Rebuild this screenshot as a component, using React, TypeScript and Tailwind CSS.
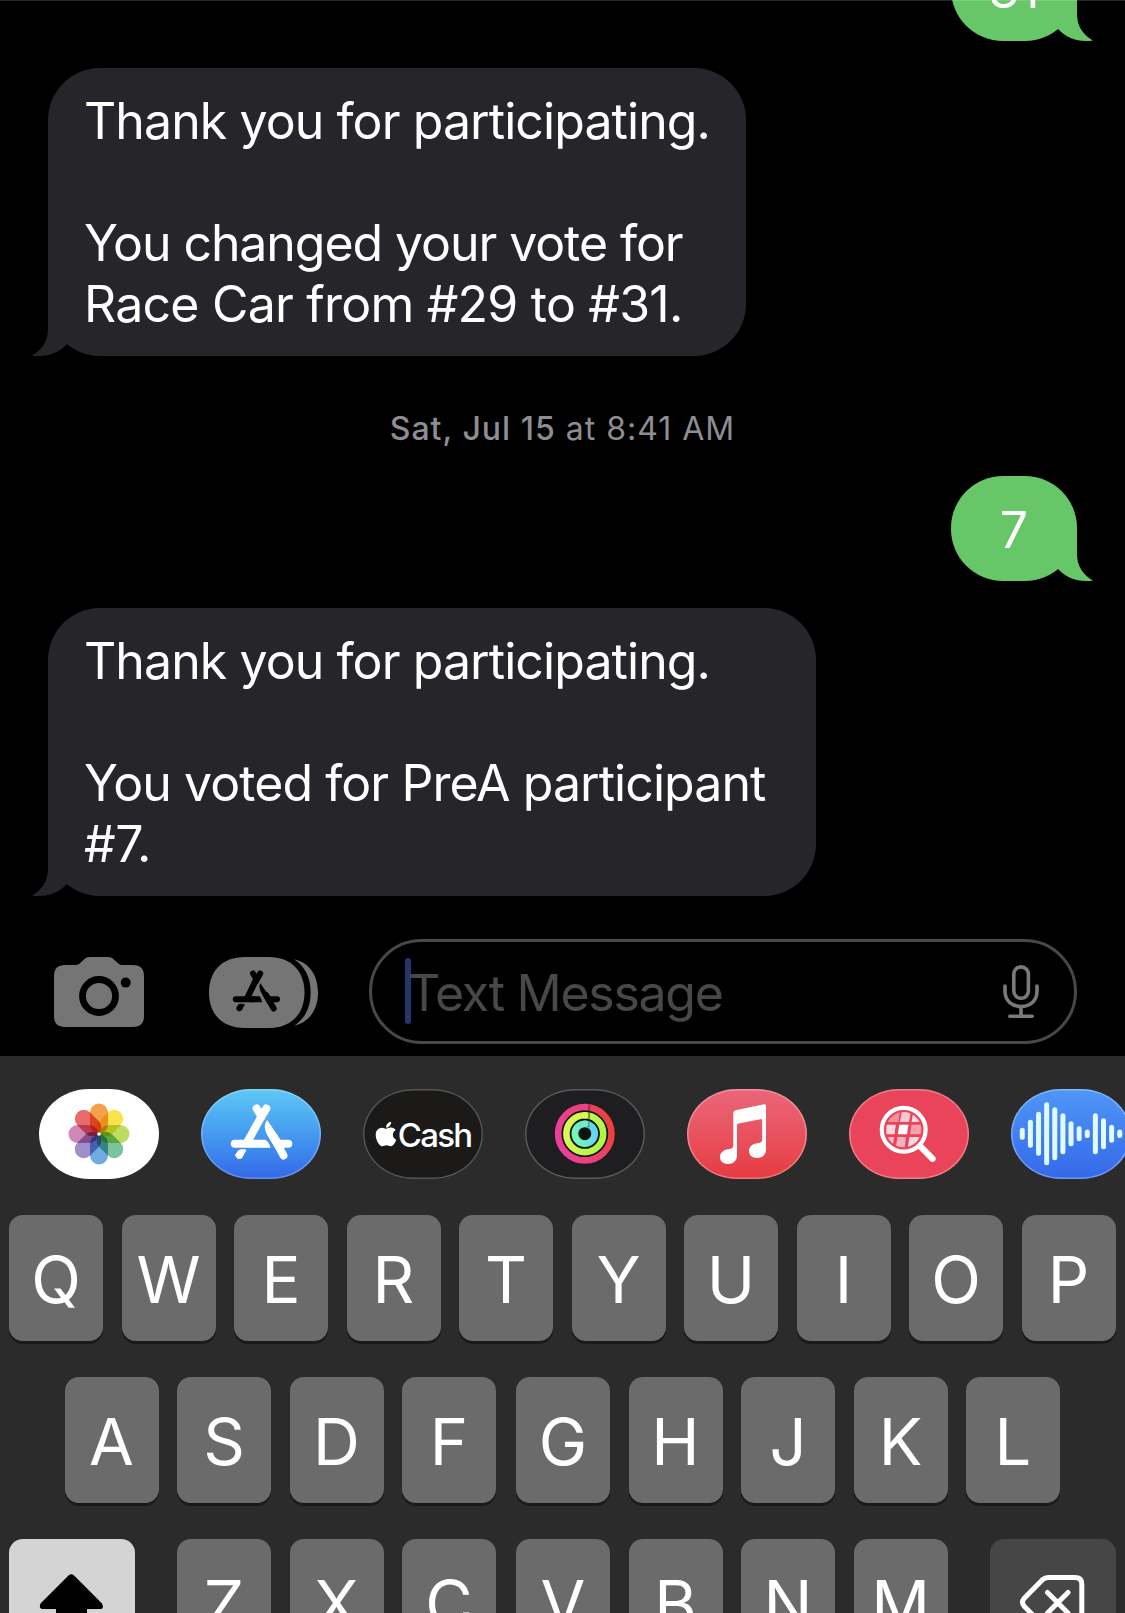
import React from "react";
import { FaApple } from "react-icons/fa";

const chip =
  "relative flex h-[90px] w-[120px] shrink-0 items-center justify-center overflow-hidden rounded-[50px/45px]";

function Tail({ side }: { side: "left" | "right" }) {
  return (
    <svg
      className={
        side === "left"
          ? "absolute bottom-0 -left-4 h-[52px] w-[52px] text-[#26252a]"
          : "absolute -right-4 bottom-0 h-[52px] w-[52px] -scale-x-100 text-[#67c768]"
      }
      viewBox="0 0 52 52"
      fill="currentColor"
    >
      <path d="M16 0V25C16 37 10 46 0 51.400C14 53.600 26 49.500 35 40L52 20V0Z" />
    </svg>
  );
}

function Incoming({ width, children }: { width: string; children: React.ReactNode }) {
  return (
    <div className={`relative ml-12 h-[288px] rounded-[52px] bg-[#26252a] pt-[23px] pl-9 ${width}`}>
      <Tail side="left" />
      <div className="relative text-[50px] leading-[61px] whitespace-nowrap text-white">{children}</div>
    </div>
  );
}

function Outgoing({ children }: { children: React.ReactNode }) {
  return (
    <div className="relative mr-12 flex h-[105px] w-[126px] shrink-0 items-center justify-center self-end rounded-[52px] bg-[#67c768] pt-[3px]">
      <Tail side="right" />
      <span className="relative text-[50px] leading-[61px] text-white">{children}</span>
    </div>
  );
}

function CameraIcon() {
  return (
    <svg width="90" height="70" viewBox="0 0 90 70">
      <path
        fill="#757575"
        d="M11 8H21C25 8 26 6 29 3.500C32 0.500 33 0 37 0H53C57 0 58 0.500 61 3.500C64 6 65 8 69 8H79Q90 8 90 19V59Q90 70 79 70H11Q0 70 0 59V19Q0 8 11 8Z"
      />
      <circle cx="45" cy="39" r="16.500" fill="none" stroke="#000" strokeWidth="6.800" />
      <circle cx="71.700" cy="25.600" r="5" fill="#000" />
    </svg>
  );
}

function AppsButtonIcon() {
  return (
    <svg width="109" height="71" viewBox="0 0 109 71">
      <path
        fill="#757575"
        d="M36 0H60C82 0 95.500 14 95.500 35.500S82 71 60 71H36C13 71 0 57 0 35.500S13 0 36 0Z"
      />
      <path fill="#757575" d="M85 2.300C100 5.500 109 18 109 35.500S100 65.500 85 68.700C96 62 101.700 50 101.700 35.500S96 9 85 2.300Z" />
      <g stroke="#000" strokeWidth="6" strokeLinecap="round" fill="none">
        <path d="M44 16.500L46.500 20.500" />
        <path d="M51.200 16.500L47 24" />
        <path d="M26.800 42.300H44" />
        <path d="M62 42.300H68" />
        <path d="M57 38L64.700 51.500" />
      </g>
      <path d="M44.200 21.500L50 24L41 42H34.500Z" />
      <path d="M42 39.300H50.500Q53 42 53 45.300H42Z" />
      <path d="M51.200 26Q49 31 53 37L59 47.500L63.500 44Z" />
      <path d="M29.700 47.500Q33 46.500 35.300 47.800L32.500 53A2.800 2.800 0 0 1 27.600 51Z" stroke="#000" strokeWidth=".8" />
    </svg>
  );
}

function MicIcon() {
  return (
    <svg width="36" height="54" viewBox="0 0 36 54" fill="none" stroke="#7a7a7a" strokeWidth="3.600" strokeLinecap="round">
      <rect x="10.800" y="1.900" width="14.600" height="31.400" rx="7.300" />
      <path d="M2 21V26C2 36 9 41.500 18 41.500S34 36 34 26V21M18 42V51M6.800 51.300H29.200" />
    </svg>
  );
}

const petals = ["#f1a24a", "#f8e34a", "#bedb62", "#7cc29b", "#70abdf", "#a08fcb", "#cf88b6", "#e96a6c"];

function PhotosIcon() {
  return (
    <svg className="isolate" width="120" height="90" viewBox="0 0 120 90">
      {petals.map((c, i) => (
        <rect
          key={c}
          x="51"
          y="14.500"
          width="18"
          height="30"
          rx="9"
          fill={c}
          transform={`rotate(${i * 45} 60 45)`}
          className="mix-blend-multiply"
        />
      ))}
      <circle cx="60" cy="45" r="1.800" fill="#fff" />
    </svg>
  );
}

function AppStoreIcon() {
  return (
    <svg width="120" height="90" viewBox="0 0 120 90">
      <g stroke="#fff" strokeWidth="8" strokeLinecap="round" fill="none">
        <path d="M55.700 19.500L59.500 26" />
        <path d="M65.300 19.500L60 28.500" />
        <path d="M33.800 54.700H48" />
        <path d="M78 54.700H87.300" />
        <path d="M72 46.500L82.500 66.500" />
      </g>
      <g fill="#fff">
        <path d="M56.500 26.500L63.500 30L52 51H42.800Z" />
        <path d="M48 50.700H64.500Q69 54 69.500 58.700H48Z" />
        <path d="M66.200 31Q61 37 66.500 46.500L74.500 60L81 53Z" />
        <path d="M37.600 61.500Q41 60 45 61L40.500 69A4 4 0 0 1 34.500 66Z" stroke="#fff" strokeWidth="1" strokeLinejoin="round" />
      </g>
    </svg>
  );
}

function ActivityIcon() {
  return (
    <svg width="120" height="90" viewBox="0 0 120 90" fill="none">
      <defs>
        <linearGradient id="ringA" x1="0" x2="1" y1=".3" y2="0">
          <stop offset="0" stopColor="#ea3f98" />
          <stop offset=".55" stopColor="#ea4270" />
          <stop offset="1" stopColor="#ee3f2c" />
        </linearGradient>
        <linearGradient id="ringB" x1="0" x2="1" y1="0" y2=".3">
          <stop offset="0" stopColor="#e2f855" />
          <stop offset="1" stopColor="#aef748" />
        </linearGradient>
        <linearGradient id="ringC" x1="0" x2="1" y1=".3" y2="0">
          <stop offset="0" stopColor="#75f3bb" />
          <stop offset="1" stopColor="#5fd2f8" />
        </linearGradient>
      </defs>
      <circle cx="59.800" cy="44.700" r="30" fill="#0c1410" />
      <circle cx="59.800" cy="44.700" r="26.700" stroke="url(#ringA)" strokeWidth="6.600" />
      <circle cx="59.800" cy="44.700" r="18.400" stroke="url(#ringB)" strokeWidth="6.600" />
      <circle cx="59.800" cy="44.700" r="9.900" stroke="url(#ringC)" strokeWidth="6.800" />
      <path d="M64 15.400V21.400" stroke="#8c1d14" strokeOpacity=".6" strokeWidth="2.500" />
      <path d="M63.800 23.600V29.600" stroke="#3f6a10" strokeOpacity=".7" strokeWidth="2.500" />
      <path d="M63.400 32.600V38.500" stroke="#1a7a80" strokeOpacity=".6" strokeWidth="2.200" />
      <circle cx="60" cy="18" r="3.300" fill="#ea4190" />
      <circle cx="60" cy="26.300" r="3.300" fill="#dff756" />
      <circle cx="60" cy="34.800" r="3.300" fill="#74efbc" />
    </svg>
  );
}

function MusicIcon() {
  return (
    <svg width="120" height="90" viewBox="0 0 120 90" fill="#fff">
      <path d="M48.500 21.200L77 15.300Q79 15 79 17V60.500C79 66 75 68.900 70 68.900C65 68.900 62 66 62 62C62 57.500 65.500 54.800 70.500 54.200C74 53.700 75.200 53 75.200 50V31.500Q75.200 29.800 73.500 30.200L51.500 34.500Q50 34.900 50 36.500V66.500C50 72 46 75 41 75C36 75 33 72 33 68C33 63.500 36.500 60.800 41.500 60.200C45 59.700 46.300 59 46.300 56V24Q46.300 21.700 48.500 21.200Z" />
    </svg>
  );
}

function ImageSearchIcon() {
  return (
    <svg width="120" height="90" viewBox="0 0 120 90" fill="#fff">
      <defs>
        <clipPath id="lens">
          <circle cx="54.700" cy="40.700" r="17.600" />
        </clipPath>
      </defs>
      <g clipPath="url(#lens)">
        <path d="M36 22H51L49.500 33H36Z" opacity=".4" />
        <path d="M53 22H62L60 33H50.800Z" opacity=".7" />
        <path d="M64.500 22H74V33H62.500Z" opacity=".8" />
        <path d="M36 35.700H46.800L45.500 45.300H36Z" opacity=".8" />
        <path d="M50.300 35.700H59.500L58 45.300H48.800Z" />
        <path d="M62.500 35.700H74V45.300H61Z" opacity=".5" />
        <path d="M36 48H45L43.500 60H36Z" opacity=".65" />
        <path d="M48.500 48H57L55.500 60H46.500Z" opacity=".6" />
        <path d="M60.500 48H74V60H58.500Z" opacity=".8" />
      </g>
      <circle cx="54.700" cy="40.700" r="21.900" fill="none" stroke="#fff" strokeWidth="4.200" />
      <path d="M71 57L83.500 69.700" stroke="#fff" strokeWidth="6.400" strokeLinecap="round" />
    </svg>
  );
}

const wave = [12, 28, 44, 63, 53, 41, 25, 15, 8.5, 41, 31, 18, 8.5];

function AudioIcon() {
  return (
    <svg width="120" height="90" viewBox="0 0 120 90" fill="#e0fbff">
      {wave.map((h, i) => (
        <rect key={i} x={8.8 + i * 8.12} y={44.7 - h / 2} width="5" height={h} rx="2.500" />
      ))}
    </svg>
  );
}

function Key({ label }: { label: string }) {
  return (
    <div className="flex h-[126px] w-[94px] shrink-0 items-center justify-center rounded-[14px] bg-[#6b6b6b] pt-[2px] text-[65px] leading-none font-normal text-white shadow-[0_3px_0_#1a1a1a]">
      {label}
    </div>
  );
}

function Keys({ letters }: { letters: string }) {
  return (
    <div className="flex gap-[18.500px]">
      {letters.split("").map((l) => (
        <Key key={l} label={l} />
      ))}
    </div>
  );
}

export default function App() {
  return (
    <div className="flex h-[1613px] w-[1125px] flex-col overflow-hidden bg-black font-['Inter','Liberation_Sans',sans-serif]">
      <main className="relative flex h-[939px] shrink-0 flex-col">
        <div className="absolute inset-x-0 top-0 z-10 h-px bg-white/15" />
        <div className="-mt-16 flex flex-col">
          <Outgoing>31</Outgoing>
        </div>
        <div className="mt-[27px]">
          <Incoming width="w-[698px]">
            <p className="tracking-[-0.920px]">Thank you for participating.</p>
            <br />
            <p className="tracking-[-1.080px]">You changed your vote for</p>
            <p className="tracking-[-0.780px]">Race Car from #29 to #31.</p>
          </Incoming>
        </div>
        <div className="mt-[53px] h-10 text-center text-[32px] leading-10 tracking-[1px] text-[#8d8d93]">
          <span className="font-medium">Sat, Jul 15</span> at 8:41 AM
        </div>
        <div className="mt-[27px] flex flex-col">
          <Outgoing>7</Outgoing>
        </div>
        <div className="mt-[27px]">
          <Incoming width="w-[768px]">
            <p className="tracking-[-0.920px]">Thank you for participating.</p>
            <br />
            <p className="tracking-[-0.930px]">You voted for PreA participant</p>
            <p className="tracking-[-0.300px]">#7.</p>
          </Incoming>
        </div>
      </main>

      <div className="flex h-[117px] shrink-0 items-start pl-[54px]">
        <div className="mt-[18px] flex h-[71px] w-[315px] items-start gap-[65px]">
          <CameraIcon />
          <AppsButtonIcon />
        </div>
        <div className="flex h-[105px] w-[708px] items-center rounded-full border-[3px] border-[#48484b] pr-[35px] pl-[33px]">
          <div className="-mt-px h-[66px] w-[6px] rounded-full bg-[#27356f]" />
          <div className="-ml-[3px] flex-1 pt-[3px] text-[50px] leading-[61px] tracking-[-1.300px] whitespace-nowrap text-[#48484b]">
            Text Message
          </div>
          <MicIcon />
        </div>
      </div>

      <section className="flex h-[557px] shrink-0 flex-col overflow-hidden bg-[#2b2b2b]">
        <div className="mt-[33px] flex h-[90px] shrink-0 gap-[42px] pl-[39px]">
          <div className={`${chip} bg-white`}>
            <PhotosIcon />
          </div>
          <div className={`${chip} bg-linear-to-b from-[#5fc8f5] to-[#3568e8] shadow-[inset_0_0_0_1.500px_rgba(255,255,255,.25)]`}>
            <AppStoreIcon />
          </div>
          <div className={`${chip} gap-px bg-[#1b1a18] text-white shadow-[inset_0_0_0_1.500px_#555]`}>
            <FaApple className="-mt-px h-[28px] w-[22px]" />
            <span className="pt-[2px] text-[33px] leading-none font-medium tracking-[-1.800px]">Cash</span>
          </div>
          <div className={`${chip} bg-[#1e1e21] shadow-[inset_0_0_0_1.500px_#5a5a5c]`}>
            <ActivityIcon />
          </div>
          <div className={`${chip} bg-linear-to-b from-[#ea667a] to-[#e63a40] shadow-[inset_0_0_0_1.500px_rgba(255,255,255,.3)]`}>
            <MusicIcon />
          </div>
          <div className={`${chip} bg-[#ea445a] shadow-[inset_0_0_0_1.500px_rgba(255,255,255,.3)]`}>
            <ImageSearchIcon />
          </div>
          <div className={`${chip} bg-linear-to-b from-[#5096f8] to-[#3568e8] shadow-[inset_0_0_0_1.500px_rgba(255,255,255,.3)]`}>
            <AudioIcon />
          </div>
        </div>

        <div className="mt-9 flex flex-col gap-9">
          <div className="pl-[9px]">
            <Keys letters="QWERTYUIOP" />
          </div>
          <div className="flex gap-5 pl-[64.500px]">
            <Keys letters="ASDF" />
            <Keys letters="GHJKL" />
          </div>
          <div className="flex pl-[9px]">
            <div className="mr-[42px] h-[126px] w-[126px] shrink-0 rounded-[14px] bg-[#d4d4d4] shadow-[0_3px_0_#1a1a1a]">
              <svg width="126" height="126" viewBox="0 0 126 126">
                <path d="M59.500 36.500Q62.300 34 65.100 36.500L93 64.500Q95.500 70 91 70H78V92H47V70H33.500Q29.500 70 31.500 64.500Z" />
              </svg>
            </div>
            <Keys letters="ZXC" />
            <div className="ml-5">
              <Keys letters="VBNM" />
            </div>
            <div className="ml-[42.500px] h-[126px] w-[126px] shrink-0 rounded-[14px] bg-[#464646] shadow-[0_3px_0_#1a1a1a]">
              <svg
                width="126"
                height="126"
                viewBox="0 0 126 126"
                fill="none"
                stroke="#fff"
                strokeWidth="5"
                strokeLinecap="round"
                strokeLinejoin="round"
              >
                <path d="M58 38.500H85Q91.800 38.500 91.800 45V81Q91.800 88 85 88H58Q55 88 52.500 86L34 67Q31 63.300 34 59.500L52.500 40.700Q55 38.500 58 38.500Z" />
                <path d="M57.500 53.500L78 74M78 53.500L57.500 74" />
              </svg>
            </div>
          </div>
        </div>
      </section>
    </div>
  );
}
